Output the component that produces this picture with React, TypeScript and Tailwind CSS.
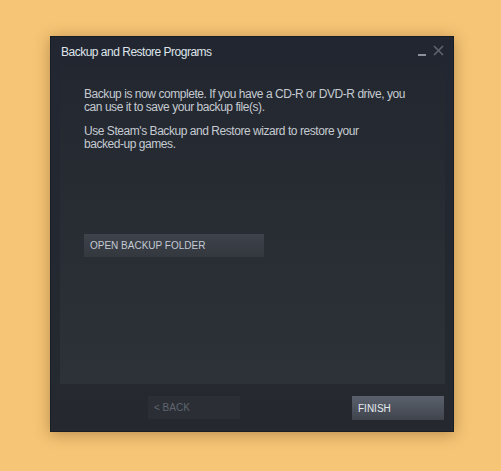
import React from "react";

export default function App() {
  const font = { fontFamily: '"Liberation Sans", Arial, sans-serif' };
  return (
    <div className="w-[501px] h-[471px] bg-[#f6c575] pt-[36px] pl-[50px]" style={font}>
      <div className="w-[404px] h-[396px] border border-[#181d25] bg-gradient-to-b from-[#212631] to-[#25292f] shadow-[0_2px_14px_rgba(60,30,0,0.35)] flex flex-col">
        <div className="h-[29px] flex items-start pl-[10px] pr-[9px] pt-[8px] relative">
          <span className="text-[12px] leading-[14px] tracking-[-0.5px] text-[#dfe4ea]">Backup and Restore Programs</span>
          <svg className="absolute left-[367px] top-[8px]" width="30" height="14" viewBox="0 0 30 14">
            <rect x="0" y="9" width="8" height="2" fill="#8c9098" />
            <path d="M16 1 L25 10 M25 1 L16 10" stroke="#5f646c" strokeWidth="1.6" />
          </svg>
        </div>
        <div className="ml-[9px] mr-[8px] h-[318px] bg-gradient-to-b from-[#23272f] to-[#2d3138] pl-[24px] pt-[22px] flex flex-col items-start">
          <p className="text-[12px] leading-[13px] tracking-[-0.45px] text-[#c5cbd2] whitespace-nowrap">
            Backup is now complete. If you have a CD-R or DVD-R drive, you
            <br />
            can use it to save your backup file(s).
          </p>
          <p className="text-[12px] leading-[13px] tracking-[-0.45px] text-[#c5cbd2] whitespace-nowrap mt-[11px]">
            Use Steam's Backup and Restore wizard to restore your
            <br />
            backed-up games.
          </p>
          <button className="mt-[83px] w-[180px] h-[23px] bg-gradient-to-b from-[#3e434c] to-[#33373e] text-left pl-[6px] text-[10px] text-[#c3cad3]">
            OPEN BACKUP FOLDER
          </button>
        </div>
        <div className="flex mt-[12px] ml-[97px]">
          <button className="w-[92px] h-[23px] bg-[#2b2f35] text-left pl-[6px] text-[10px] text-[#5e6570]">
            &lt; BACK
          </button>
          <button className="ml-[112px] w-[92px] h-[24px] bg-gradient-to-b from-[#5b616c] to-[#3f444d] text-left pl-[6px] text-[10px] text-[#e6ebf1]">
            FINISH
          </button>
        </div>
      </div>
    </div>
  );
}
